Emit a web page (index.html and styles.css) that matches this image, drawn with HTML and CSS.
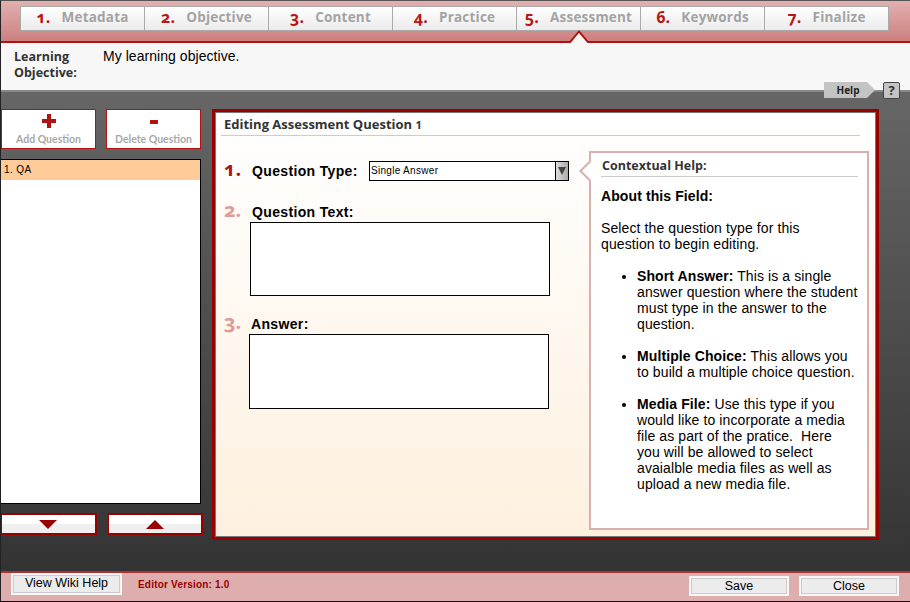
FILE: index.html
```html
<!DOCTYPE html>
<html lang="en">
<head>
    <meta charset="UTF-8">
    <title>Editing Assessment Question</title>
    <link rel="stylesheet" href="styles.css">
</head>
<body>
    <!-- Steps -->
    <div class="top-bar">
        <div class="steps">
            <a class="step"><span class="step-num">1.</span>Metadata</a>
            <a class="step"><span class="step-num">2.</span>Objective</a>
            <a class="step"><span class="step-num">3.</span>Content</a>
            <a class="step"><span class="step-num">4.</span>Practice</a>
            <a class="step step-active"><span class="step-num">5.</span>Assessment</a>
            <a class="step"><span class="step-num">6.</span>Keywords</a>
            <a class="step"><span class="step-num">7.</span>Finalize</a>
        </div>
    </div>

    <!-- Objective -->
    <div class="objective">
        <div class="objective-label">Learning<br>Objective:</div>
        <div class="objective-text">My learning objective.</div>
        <div class="help-tag">Help</div>
        <div class="help-q">?</div>
    </div>

    <div class="workspace">
        <!-- Question list -->
        <div class="sidebar">
            <div class="list-actions">
                <button class="list-btn"><span class="icon-plus"></span>Add Question</button>
                <button class="list-btn"><span class="icon-minus"></span>Delete Question</button>
            </div>
            <div class="question-list">
                <div class="question-item">1. QA</div>
            </div>
            <div class="move-actions">
                <button class="move-btn"><span class="arrow-down"></span></button>
                <button class="move-btn"><span class="arrow-up"></span></button>
            </div>
        </div>

        <!-- Editor -->
        <div class="editor">
            <h1 class="editor-title">Editing Assessment Question <span class="editor-num">1</span></h1>
            <div class="editor-body">
                <div class="fields">
                    <div class="field-row">
                        <span class="field-num">1.</span>
                        <label class="field-label">Question Type:</label>
                        <div class="select-box">
                            <span class="select-value">Single Answer</span>
                            <span class="select-btn"><span class="select-arrow"></span></span>
                        </div>
                    </div>
                    <div class="field-row field-row-second">
                        <span class="field-num field-num-dim">2.</span>
                        <label class="field-label">Question Text:</label>
                    </div>
                    <div class="text-box"></div>
                    <div class="field-row field-row-third">
                        <span class="field-num field-num-dim">3.</span>
                        <label class="field-label field-label-answer">Answer:</label>
                    </div>
                    <div class="text-box text-box-answer"></div>
                </div>

                <div class="context-help">
                    <div class="context-title">Contextual Help:</div>
                    <p class="context-head">About this Field:</p>
                    <p class="context-text">Select the question type for this question to begin editing.</p>
                    <ul class="context-list">
                        <li><b>Short Answer:</b> This is a single answer question where the student must type in the answer to the question.</li>
                        <li><b>Multiple Choice:</b> This allows you to build a multiple choice question.</li>
                        <li><b>Media File:</b> Use this type if you would like to incorporate a media file as part of the pratice.&nbsp; Here you will be allowed to select avaialble media files as well as upload a new media file.</li>
                    </ul>
                </div>
            </div>
        </div>
    </div>

    <!-- Footer -->
    <div class="footer">
        <button class="foot-btn foot-btn-wiki">View Wiki Help</button>
        <span class="version">Editor Version: 1.0</span>
        <button class="foot-btn foot-btn-save">Save</button>
        <button class="foot-btn">Close</button>
    </div>
</body>
</html>
```

FILE: styles.css
```css
html, body {
    margin: 0;
    padding: 0;
}

body {
    width: 909px;
    height: 600px;
    border-left: 1px solid #222;
    border-top: 1px solid #555;
    border-bottom: 1px solid #111;
    overflow: hidden;
    font-family: "Liberation Sans", Arial, sans-serif;
    font-size: 14px;
    color: #000;
    background-color: #444;
}

/* Steps */
.top-bar {
    box-sizing: border-box;
    height: 42px;
    padding: 5px 0 0 19px;
    background: linear-gradient(#e2b0b0, #cd8080);
    border-bottom: 2px solid #b31212;
}

.steps {
    display: flex;
    width: 869px;
    height: 25px;
    box-sizing: border-box;
    border: 1px solid #aaa;
    background: linear-gradient(#ffffff, #ebebeb);
}

.step {
    position: relative;
    flex: 1;
    display: flex;
    justify-content: center;
    align-items: center;
    gap: 11px;
    border-left: 1px solid #aaa;
    font-family: "Open Sans", sans-serif;
    font-weight: 700;
    font-size: 13.5px;
    letter-spacing: 0.2px;
    color: #a3a3a3;
    padding-bottom: 3px;
}

.step:first-child {
    border-left: 0;
}

.step-num {
    font-size: 16px;
    font-feature-settings: "onum";
    color: #bd1414;
}

/* little notch under the active step */
.step-active::before,
.step-active::after {
    content: "";
    position: absolute;
    left: 51px;
    width: 22px;
    height: 13px;
    clip-path: polygon(0 100%, 50% 0, 100% 100%);
}

.step-active::before {
    bottom: -13px;
    background-color: #b31212;
}

.step-active::after {
    bottom: -16px;
    background-color: #f7f7f7;
}

/* Objective */
.objective {
    position: relative;
    height: 49px;
    display: flex;
    box-sizing: border-box;
    background-color: #f7f7f7;
    border-bottom: 2px solid #888;
    padding: 5px 0 0 13px;
}

.objective-label {
    width: 89px;
    padding-top: 1px;
    font-family: "Open Sans", sans-serif;
    font-weight: 700;
    font-size: 12.5px;
    line-height: 16px;
    color: #333;
}

.objective-text {
    line-height: 16px;
    letter-spacing: 0.05px;
}

.help-tag {
    position: absolute;
    left: 823px;
    top: 39px;
    width: 51px;
    height: 16px;
    box-sizing: border-box;
    padding-right: 3px;
    background-color: #c4c4c4;
    clip-path: polygon(0 0, 43px 0, 51px 8px, 43px 16px, 0 16px);
    font-family: "Open Sans", sans-serif;
    font-weight: 700;
    font-size: 10px;
    line-height: 16px;
    color: #222;
    text-align: center;
}

.help-q {
    position: absolute;
    left: 882px;
    top: 39px;
    width: 15px;
    height: 15px;
    border: 1px solid #444;
    border-radius: 2px;
    background-color: #c4c4c4;
    font-family: "Open Sans", sans-serif;
    font-weight: 700;
    font-size: 13px;
    line-height: 15px;
    color: #333;
    text-align: center;
}

/* Workspace */
.workspace {
    height: 479px;
    box-sizing: border-box;
    display: flex;
    padding: 17px 0 0 0;
    background: linear-gradient(#666666, #333333);
}

.sidebar {
    width: 202px;
    display: flex;
    flex-direction: column;
}

.list-actions {
    display: flex;
    gap: 10px;
    width: 200px;
}

.list-btn {
    width: 95px;
    height: 40px;
    box-sizing: border-box;
    padding: 4px 0 0;
    display: flex;
    flex-direction: column;
    align-items: center;
    background-color: #fff;
    border: 1px solid #b31212;
    font-family: "Lato", sans-serif;
    font-weight: 700;
    font-size: 10.5px;
    color: #a8a8a8;
}

.icon-plus {
    width: 14px;
    height: 14px;
    margin-bottom: 5px;
    background:
        linear-gradient(#b31212, #b31212) center / 14px 4px no-repeat,
        linear-gradient(#b31212, #b31212) center / 4px 14px no-repeat;
}

.icon-minus {
    width: 8px;
    height: 4px;
    margin: 6px 0 9px;
    background-color: #b31212;
}

.question-list {
    width: 200px;
    height: 345px;
    box-sizing: border-box;
    margin-top: 10px;
    background-color: #fff;
    border: 1px solid #000;
    border-left: 0;
}

.question-item {
    height: 20px;
    padding-left: 3px;
    background-color: #ffcc99;
    font-size: 10px;
    letter-spacing: 0.4px;
    line-height: 19px;
}

.move-actions {
    display: flex;
    gap: 11px;
    margin-top: 9px;
}

.move-btn {
    width: 96px;
    height: 22px;
    box-sizing: border-box;
    padding: 0;
    display: flex;
    justify-content: center;
    align-items: center;
    border: 2px solid #990000;
    border-left-width: 1px;
    background: linear-gradient(#ffffff 50%, #efefef 50%);
}

.arrow-down {
    border-top: 9px solid #990000;
    border-left: 9px solid transparent;
    border-right: 9px solid transparent;
}

.arrow-up {
    border-bottom: 9px solid #990000;
    border-left: 9px solid transparent;
    border-right: 9px solid transparent;
}

/* Editor */
.editor {
    width: 667px;
    height: 431px;
    box-sizing: border-box;
    margin-left: 9px;
    padding: 0 6px;
    border: 3px solid #990000;
    outline: 1px solid #777;
    outline-offset: -4px;
    background: linear-gradient(#ffffff, #fdf0df);
}

.editor-title {
    box-sizing: border-box;
    margin: 0 10px 0 0;
    height: 24px;
    padding: 4px 0 0 3px;
    border-bottom: 1px solid #ccc;
    font-family: "Open Sans", sans-serif;
    font-weight: 700;
    font-size: 13px;
    line-height: 16px;
    color: #333;
}

.editor-num {
    font-size: 11px;
}

.editor-body {
    display: flex;
}

.fields {
    width: 368px;
}

.field-row {
    display: flex;
    align-items: center;
    height: 20px;
    margin-top: 25px;
    padding-left: 3px;
}

.field-row-second {
    margin-top: 21px;
}

.field-row-third {
    margin-top: 18px;
}

.field-num {
    width: 28px;
    margin-bottom: 5px;
    font-family: "Open Sans", sans-serif;
    font-weight: 700;
    font-size: 20px;
    font-feature-settings: "onum";
    color: #b31212;
}

.field-num-dim {
    color: #e09a9a;
}

.field-label {
    width: 117px;
    font-weight: 700;
    font-size: 14px;
    letter-spacing: 0.35px;
}

.field-label-answer {
    margin-left: -1px;
}

.select-box {
    width: 200px;
    height: 20px;
    box-sizing: border-box;
    display: flex;
    justify-content: space-between;
    background-color: #fff;
    border: 1px solid #000;
}

.select-value {
    padding-left: 1px;
    font-size: 10px;
    letter-spacing: 0.3px;
    line-height: 18px;
}

.select-btn {
    width: 12px;
    display: flex;
    justify-content: center;
    align-items: center;
    border-left: 1px solid #000;
    background: linear-gradient(to right, #ddd, #aaa);
}

.select-arrow {
    border-top: 8px solid #444;
    border-left: 4px solid transparent;
    border-right: 4px solid transparent;
}

.text-box {
    width: 300px;
    height: 74px;
    box-sizing: border-box;
    margin: 0 0 0 29px;
    background-color: #fff;
    border: 1px solid #000;
}

.text-box-answer {
    height: 75px;
    margin-left: 28px;
}

/* Contextual help */
.context-help {
    position: relative;
    width: 280px;
    height: 379px;
    box-sizing: border-box;
    margin-top: 15px;
    padding: 0 9px 0 10px;
    background-color: #fff;
    border: 2px solid #d9b0b0;
    letter-spacing: 0.1px;
}

.context-help::before {
    content: "";
    position: absolute;
    left: -9px;
    top: 11px;
    width: 14px;
    height: 14px;
    box-sizing: border-box;
    background-color: #fff;
    border-left: 2px solid #d9b0b0;
    border-bottom: 2px solid #d9b0b0;
    transform: rotate(45deg);
}

.context-title {
    position: relative;
    height: 23px;
    padding-left: 1px;
    border-bottom: 1px solid #ccc;
    font-family: "Open Sans", sans-serif;
    font-weight: 700;
    font-size: 12.5px;
    letter-spacing: 0;
    line-height: 25px;
    color: #333;
}

.context-head {
    margin: 11px 0 0;
    font-weight: 700;
    line-height: 16px;
}

.context-text {
    width: 250px;
    margin: 16px 0 0;
    line-height: 16px;
}

.context-list {
    margin: 16px 0 0;
    padding: 0 0 0 36px;
    line-height: 16px;
}

.context-list li {
    margin-bottom: 16px;
}

/* Footer */
.footer {
    height: 30px;
    box-sizing: border-box;
    display: flex;
    align-items: flex-start;
    padding: 0 11px 0 10px;
    background-color: #deaeae;
    border-top: 2px solid #b03030;
}

.foot-btn {
    width: 100px;
    height: 20px;
    box-sizing: border-box;
    margin-top: 3px;
    margin-left: 10px;
    padding: 0 0 1px;
    background-color: #ececec;
    border: 2px solid #f7f7f7;
    outline: 1px solid #ccc;
    outline-offset: -3px;
    font-family: "Liberation Sans", Arial, sans-serif;
    font-size: 12.5px;
    color: #000;
}

.foot-btn-wiki {
    width: 111px;
    height: 22px;
    margin: 0;
    padding-bottom: 3px;
}

.foot-btn-save {
    margin-left: auto;
}

.version {
    margin: 6px 0 0 16px;
    font-size: 10px;
    font-weight: 700;
    letter-spacing: 0.2px;
    color: #990000;
}
```
